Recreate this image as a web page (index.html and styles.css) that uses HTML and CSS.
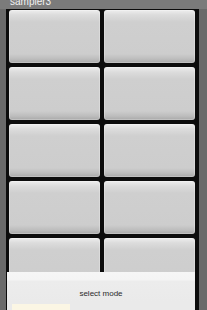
FILE: index.html
```html
<!DOCTYPE html>
<html lang="en">
<head>
  <meta charset="UTF-8" />
  <title>sampler3</title>
  <link rel="stylesheet" href="styles.css">
</head>
<body>
  <div class="titlebar"><span>sampler3</span></div>
  <div class="frame">
    <div class="pads">
      <div class="pad"></div>
      <div class="pad"></div>
      <div class="pad"></div>
      <div class="pad"></div>
      <div class="pad"></div>
      <div class="pad"></div>
      <div class="pad"></div>
      <div class="pad"></div>
      <div class="pad"></div>
      <div class="pad"></div>
    </div>
  </div>
  <div class="dialog">
    <div class="dialog-top"></div>
    <p class="dialog-title">select mode</p>
    <div class="dialog-list">
      <div class="item"></div>
    </div>
  </div>
</body>
</html>
```

FILE: styles.css
```css
body {
  margin: 0;
  width: 207px;
  height: 310px;
  overflow: hidden;
  background: #6a6a6a;
  font-family: 'Liberation Sans', Arial, sans-serif;
  position: relative;
}
.titlebar {
  height: 9px;
  background: #7b7b7b;
  overflow: hidden;
  padding-left: 10px;
}
.titlebar span {
  display: block;
  color: #f2f2f2;
  font-size: 10px;
  line-height: 10px;
  margin-top: -3px;
}
.frame {
  margin: 0 8px 0 6px;
  background: #0c0c0c;
  height: 301px;
  padding: 1px 4px 0 3px;
}
.pads {
  display: grid;
  grid-template-columns: 91px 91px;
  grid-auto-rows: 53px;
  column-gap: 4px;
  row-gap: 4px;
}
.pad {
  border-radius: 3px;
  background: linear-gradient(to bottom, #eeeeee 0px, #dcdcdc 5px, #cfcfcf 12px, #cdcdcd 44px, #bdbdbd 49px, #a8a8a8 53px);
  box-shadow: inset 0 0 0 1px rgba(255,255,255,0.25);
}
.dialog {
  position: absolute;
  left: 7px;
  top: 272px;
  width: 188px;
  height: 38px;
  background: linear-gradient(to bottom, #f6f6f6 0px, #f4f4f4 8px, #ececec 9px, #eaeaea 30px);
}
.dialog-top {
  height: 12px;
}
.dialog-title {
  margin: 0;
  text-align: center;
  font-size: 8px;
  line-height: 20px;
  color: #2a2a2a;
}
.dialog-list {
  padding: 0 5px;
}
.item {
  width: 58px;
  height: 6px;
  background: #fbf6e4;
}
```
